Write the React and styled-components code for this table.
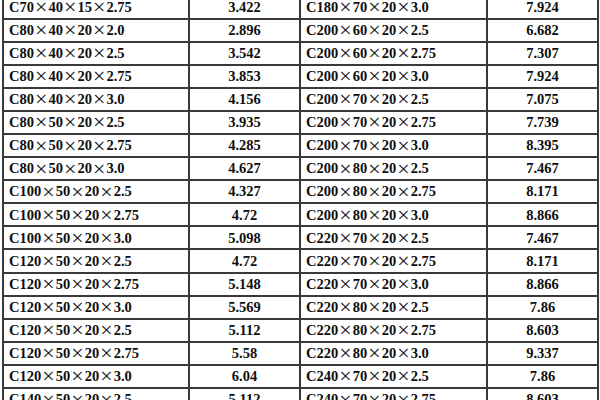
import React from 'react';
import styled, { createGlobalStyle } from 'styled-components';

const GlobalStyle = createGlobalStyle`
  html, body {
    margin: 0;
    padding: 0;
    background: #ffffff;
  }
  body {
    width: 600px;
    height: 400px;
    overflow: hidden;
  }
`;

const Viewport = styled.div`
  width: 600px;
  height: 400px;
  overflow: hidden;
  background: #ffffff;
`;

const Grid = styled.div`
  display: grid;
  grid-template-columns: 184px 109px 185px 109px;
  grid-auto-rows: 21.1px;
  gap: 2px;
  padding: 2px;
  margin: -5.6px 0 0 2px;
  width: max-content;
  background: #3a3a3a;
`;

const Cell = styled.div`
  display: flex;
  align-items: center;
  justify-content: ${props => (props.center ? 'center' : 'flex-start')};
  padding-left: ${props => (props.center ? '0' : '5px')};
  background: #ffffff;
  font-family: "Liberation Serif", "Times New Roman", serif;
  font-weight: 700;
  font-size: 14.5px;
  color: #0e0e0e;
  white-space: nowrap;
  line-height: 1;
`;

const Times = styled.span`
  display: inline-block;
  width: 14.5px;
  text-align: center;
  font-size: 22px;
  font-weight: 400;
  color: #1a1a1a;
  line-height: 14px;
`;

const left = [
  ['C70×40×15×2.75', '3.422'],
  ['C80×40×20×2.0', '2.896'],
  ['C80×40×20×2.5', '3.542'],
  ['C80×40×20×2.75', '3.853'],
  ['C80×40×20×3.0', '4.156'],
  ['C80×50×20×2.5', '3.935'],
  ['C80×50×20×2.75', '4.285'],
  ['C80×50×20×3.0', '4.627'],
  ['C100×50×20×2.5', '4.327'],
  ['C100×50×20×2.75', '4.72'],
  ['C100×50×20×3.0', '5.098'],
  ['C120×50×20×2.5', '4.72'],
  ['C120×50×20×2.75', '5.148'],
  ['C120×50×20×3.0', '5.569'],
  ['C120×50×20×2.5', '5.112'],
  ['C120×50×20×2.75', '5.58'],
  ['C120×50×20×3.0', '6.04'],
  ['C140×50×20×2.5', '5.112'],
];

const right = [
  ['C180×70×20×3.0', '7.924'],
  ['C200×60×20×2.5', '6.682'],
  ['C200×60×20×2.75', '7.307'],
  ['C200×60×20×3.0', '7.924'],
  ['C200×70×20×2.5', '7.075'],
  ['C200×70×20×2.75', '7.739'],
  ['C200×70×20×3.0', '8.395'],
  ['C200×80×20×2.5', '7.467'],
  ['C200×80×20×2.75', '8.171'],
  ['C200×80×20×3.0', '8.866'],
  ['C220×70×20×2.5', '7.467'],
  ['C220×70×20×2.75', '8.171'],
  ['C220×70×20×3.0', '8.866'],
  ['C220×80×20×2.5', '7.86'],
  ['C220×80×20×2.75', '8.603'],
  ['C220×80×20×3.0', '9.337'],
  ['C240×70×20×2.5', '7.86'],
  ['C240×70×20×2.75', '8.603'],
];

const Spec = ({ text }) => {
  const parts = text.split('×');
  return (
    <>
      {parts.map((p, i) => (
        <React.Fragment key={i}>
          {i > 0 && <Times>×</Times>}
          {p}
        </React.Fragment>
      ))}
    </>
  );
};

export default function App() {
  return (
    <Viewport>
      <GlobalStyle />
      <Grid>
        {left.map((row, i) => (
          <React.Fragment key={i}>
            <Cell><Spec text={row[0]} /></Cell>
            <Cell center>{row[1]}</Cell>
            <Cell><Spec text={right[i][0]} /></Cell>
            <Cell center>{right[i][1]}</Cell>
          </React.Fragment>
        ))}
      </Grid>
    </Viewport>
  );
}
